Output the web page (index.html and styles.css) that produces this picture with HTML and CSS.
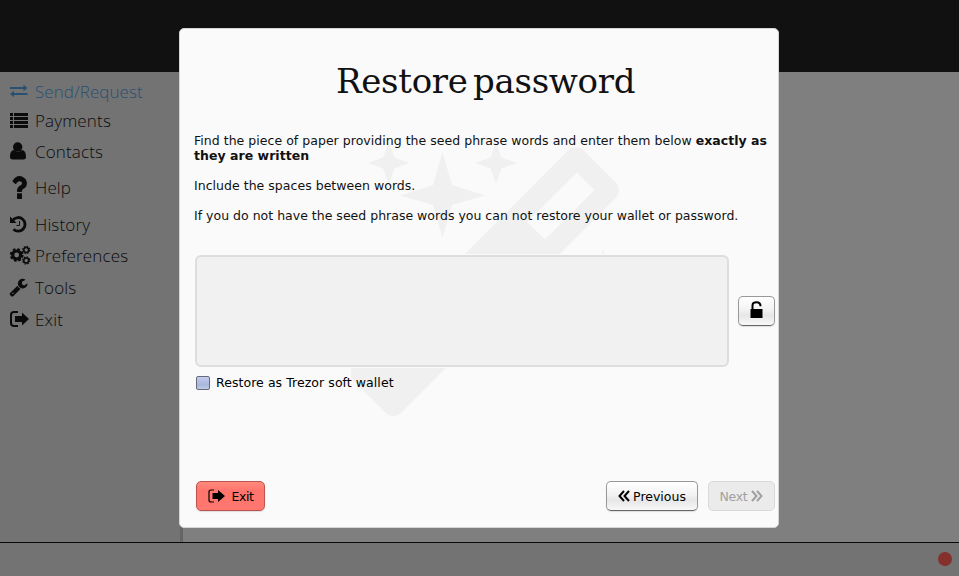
FILE: index.html
```html
<!DOCTYPE html>
<html lang="en">
<head>
<meta charset="utf-8">
<title>Restore password</title>
<link rel="stylesheet" href="styles.css">
</head>
<body>
<div class="app">
  <header class="topbar"></header>
  <div class="workspace">
    <nav class="sidebar">
      <a class="item active send"><svg viewBox="0 0 20 20"><path d="M1 6h13.500V3.800L18.500 7l-4 3.200V8H1zM18.500 12H5V9.800L1 13l4 3.200V14h13.500z"/></svg><span>Send/Request</span></a>
      <a class="item payments"><svg viewBox="0 0 20 20"><path d="M1 3h3v3H1zM5 3h14v3H5zM1 7h3v3H1zM5 7h14v3H5zM1 11h3v3H1zM5 11h14v3H5zM1 15h3v3H1zM5 15h14v3H5z"/></svg><span>Payments</span></a>
      <a class="item contacts"><svg viewBox="0 0 20 20"><circle cx="8.700" cy="6" r="4.700"/><path d="M5 9C2 9.300 1 12.500 1 16q0 2.500 3 2.500h10q3 0 3-2.500c0-3.500-1-6.700-4-7q-4 3.500-8 0z"/></svg><span>Contacts</span></a>
      <a class="item help"><svg class="question" viewBox="380 250 1030 1292" preserveAspectRatio="none"><path d="M1088 1256v240q0 16-12 28t-28 12h-240q-16 0-28-12t-12-28v-240q0-16 12-28t28-12h240q16 0 28 12t12 28zm316-600q0 54-15.500 101t-35 76.500-55 59.500-57.500 43.500-61 35.500q-41 23-68.500 65t-27.500 67q0 17-12 32.500t-28 15.500h-240q-15 0-25.500-18.500t-10.500-37.500v-45q0-83 65-156.500t143-108.500q59-27 84-56t25-76q0-42-46.500-74t-107.500-32q-65 0-108 29-35 25-107 115-13 16-31 16-12 0-25-8l-164-125q-13-10-15.500-25t5.500-28q160-266 464-266 80 0 161 31t146 83 106 127.500 41 158.500z"/></svg><span>Help</span></a>
      <a class="item history"><svg viewBox="0 0 20 20"><path d="M1 2.500l6.500 6.500H1z"/><path class="line" d="M4 6a6.800 6.800 0 1 1 .5 9.200"/><path class="hand" d="M10.500 7v4.500h-3"/></svg><span>History</span></a>
      <a class="item preferences"><svg class="cogs" viewBox="0 0 22 20"><circle class="gear" cx="7.700" cy="10" r="4"/><circle class="teeth" cx="7.700" cy="10" r="5.900"/><circle class="gear small" cx="17.200" cy="5" r="2.400"/><circle class="teeth small" cx="17.200" cy="5" r="3.500"/><circle class="gear small" cx="17.200" cy="15.500" r="2.400"/><circle class="teeth small" cx="17.200" cy="15.500" r="3.500"/></svg><span>Preferences</span></a>
      <a class="item tools"><svg class="wrench" viewBox="20 60 1750 1750"><path d="M448 1472q0-26-19-45t-45-19-45 19-19 45 19 45 45 19 45-19 19-45zm644-420l-682 682q-37 37-90 37-52 0-91-37l-106-108q-38-36-38-90 0-53 38-91l681-681q39 98 114.500 173.500t173.500 114.500zm634-435q0 39-23 106-47 134-164.500 217.500t-258.500 83.500q-185 0-316.500-131.500t-131.500-316.500 131.500-316.500 316.500-131.500q58 0 121.500 16.500t107.500 46.500q16 11 16 28t-16 28l-293 169v224l193 107q5-3 79-48.500t135.500-81 70.500-35.500q15 0 23.500 10t8.500 25z"/></svg><span>Tools</span></a>
      <a class="item leave"><svg viewBox="0 0 20 20"><path class="frame" d="M9 3H5Q2 3 2 6v8q0 3 3 3h4"/><path d="M6 7h7V3.500l7 6.500-7 6.500V13H6z"/></svg><span>Exit</span></a>
    </nav>
    <main class="content"></main>
  </div>
  <footer class="statusbar"><i class="status"></i></footer>
</div>

<section class="dialog">
  <svg class="wand" viewBox="180 29 598 498">
    <rect x="322" y="248" width="325.500" height="67.200" rx="11" transform="rotate(-45 484.750 281.750)"/>
    <path class="hole" d="M577 172.500l17.500 17.500-49.500 49.500-18-17.500z"/>
    <path d="M389 142l5.500 15.500 15 5.500-15 5.500-5.500 15.500-6-15.500-15-5.500 15-5.500zM496 142l5.500 15.500 15.500 5.500-15.500 5.500-5.500 15.500-5.500-15.500-15.500-5.500 15.500-5.500zM442.500 152l9.500 33 33 10.500-33 9.500-9.500 33-9.500-33-33-9.500 33-10.500zM602 254l1-4 1 0v4z"/>
    <path class="hole" d="M340 370h11v12h-11zM194 254h537v114H194z"/>
  </svg>
  <h1>Restore password</h1>
  <div class="notes">
    <p>Find the piece of paper providing the seed phrase words and enter them below <b>exactly as<br>they are written</b></p>
    <p>Include the spaces between words.</p>
    <p class="warning">If you do not have the seed phrase words you can not restore your wallet or password.</p>
  </div>
  <div class="entry">
    <div class="seed"></div>
    <div class="btn unlock"><svg viewBox="0 0 14 18"><path d="M.5 8h12v9H.5z"/><path class="shackle" d="M2.500 8V4.500Q2.500 1.300 6.500 1.300t4 4"/></svg></div>
  </div>
  <div class="option"><i class="box"></i><span>Restore as Trezor soft wallet</span></div>
  <div class="actions">
    <div class="btn danger"><svg class="door" viewBox="0 0 20 16"><path class="thin" d="M7 2H4Q2 2 2 4v8q0 2 2 2h3"/><path d="M5.500 5H11V2l7 6-7 6v-3H5.500z"/></svg><span>Exit</span></div>
    <div class="btn previous"><svg class="chevrons" viewBox="0 0 12 12"><path d="M6 1L1.500 6 6 11M11 1L6.500 6 11 11"/></svg><span>Previous</span></div>
    <div class="btn next"><span>Next</span><svg class="chevrons" viewBox="0 0 12 12"><path d="M1 1l4.500 5L1 11M6 1l4.500 5L6 11"/></svg></div>
  </div>
</section>
</body>
</html>
```

FILE: styles.css
```css
* { box-sizing: border-box; }
body { margin: 0; overflow: hidden; font-family: "DejaVu Sans", sans-serif; font-size: 12.5px; color: #111; }
.app { height: 576px; display: flex; flex-direction: column; }
.topbar { height: 72px; background: #111; }
.workspace { flex: 1; display: flex; }
.sidebar { width: 183px; padding-top: 4px; background: #737373; border-right: 3px solid #656565; }
.content { flex: 1; background: #7f7f7f; }
.statusbar { height: 34px; border-top: 1px solid #080808; background: #737373; display: flex; align-items: center; justify-content: flex-end; padding: 0 7px 1px 0; }
.status { width: 14px; height: 14px; border-radius: 50%; background: #85302d; }

.item { display: flex; align-items: center; height: 32px; padding-left: 9px; color: #0b0b0b; fill: #0b0b0b; font: 300 17px "Open Sans", sans-serif; letter-spacing: .15px; }
.item svg { width: 20px; height: 20px; flex: none; margin-right: 6px; overflow: visible; }
.item span { white-space: nowrap; }
.active { color: #285072; fill: #285072; letter-spacing: .05px; }
.send { height: 30px; }
.payments { height: 28px; }
.contacts { height: 34px; }
.help { height: 38px; }
.history { height: 36px; }
.preferences { height: 26px; }
.tools { height: 38px; }
.leave { height: 26px; }
.item .question { width: 16px; height: 23px; margin: 0 8px 0 2px; }
.item .wrench { width: 19px; height: 19px; margin: 0 7px 0 0; }
.item .cogs { width: 22px; margin-right: 4px; }
.line { fill: none; stroke: #0b0b0b; stroke-width: 2.8; }
.hand { fill: none; stroke: #0b0b0b; stroke-width: 1; }
.frame { fill: none; stroke: #0b0b0b; stroke-width: 2; }
.gear { fill: none; stroke: #0b0b0b; stroke-width: 3.2; }
.teeth { fill: none; stroke: #0b0b0b; stroke-width: 2; stroke-dasharray: 2.6 2.034; }
.gear.small { stroke-width: 1.5; }
.teeth.small { stroke-width: 1.4; stroke-dasharray: 1.5 1.249; }

.dialog { position: absolute; left: 179px; top: 28px; width: 600px; height: 500px; border: 1px solid #d5d5d5; border-radius: 5px; background: #fafafa; display: flex; flex-direction: column; }
.wand { position: absolute; left: 0; top: 0; width: 598px; height: 498px; fill: #f0f0f0; }
.hole { fill: #fafafa; }
.dialog > :not(.wand) { position: relative; }
h1 { margin: 30px 0 0 156px; height: 44px; font: 400 34px/44px "DejaVu Serif", serif; letter-spacing: -.3px; word-spacing: -5px; white-space: nowrap; }
.notes { margin: 30px 0 0 14px; height: 122px; line-height: 15px; white-space: nowrap; letter-spacing: .03px; }
.notes p { margin: 0 0 15px; }
.notes .warning { letter-spacing: .01px; }
.entry { display: flex; align-items: center; margin-left: 15px; height: 112px; gap: 9px; }
.seed { width: 534px; height: 112px; border: 2px solid #ddd; border-radius: 6px; background: #f1f1f1; }
.btn { height: 30px; border: 1px solid #999; border-bottom-color: #666; border-radius: 5px; display: flex; align-items: center; justify-content: center; background: linear-gradient(#fff 0%, #f3f3f3 45%, #e6e6e6 65%, #f8f8f8 100%); box-shadow: 0 1px 1px #ddd; white-space: nowrap; }
.unlock { width: 37px; }
.unlock svg { width: 14px; height: 18px; margin-top: -2px; }
.shackle { fill: none; stroke: #000; stroke-width: 2; }
.option { display: flex; align-items: center; gap: 6px; margin: 8px 0 0 16px; height: 15px; color: #000; letter-spacing: .06px; }
.box { width: 14px; height: 14px; border: 1px solid #666a7a; border-radius: 2px; background: linear-gradient(#c5caf0, #a8b8da 65%, #bfcbe6); }
.actions { display: flex; margin: 91px 3px 0 16px; color: #000; }
.danger { width: 69px; gap: 4px; border-color: #bd5450; background: linear-gradient(#ff8b7c, #ff756e 30%, #ff7770); margin-right: auto; }
.danger span { letter-spacing: -.4px; }
.door { width: 20px; height: 16px; }
.thin { fill: none; stroke: #000; stroke-width: 1.2; }
.previous { width: 92px; gap: 3px; margin-right: 10px; }
.next { width: 67px; gap: 4px; color: #a0a0a0; border-color: #d9d9d9; background: #ebebeb; box-shadow: none; }
.next span { letter-spacing: -.3px; }
.chevrons { width: 12px; height: 12px; fill: none; stroke: currentColor; stroke-width: 2; }
```
